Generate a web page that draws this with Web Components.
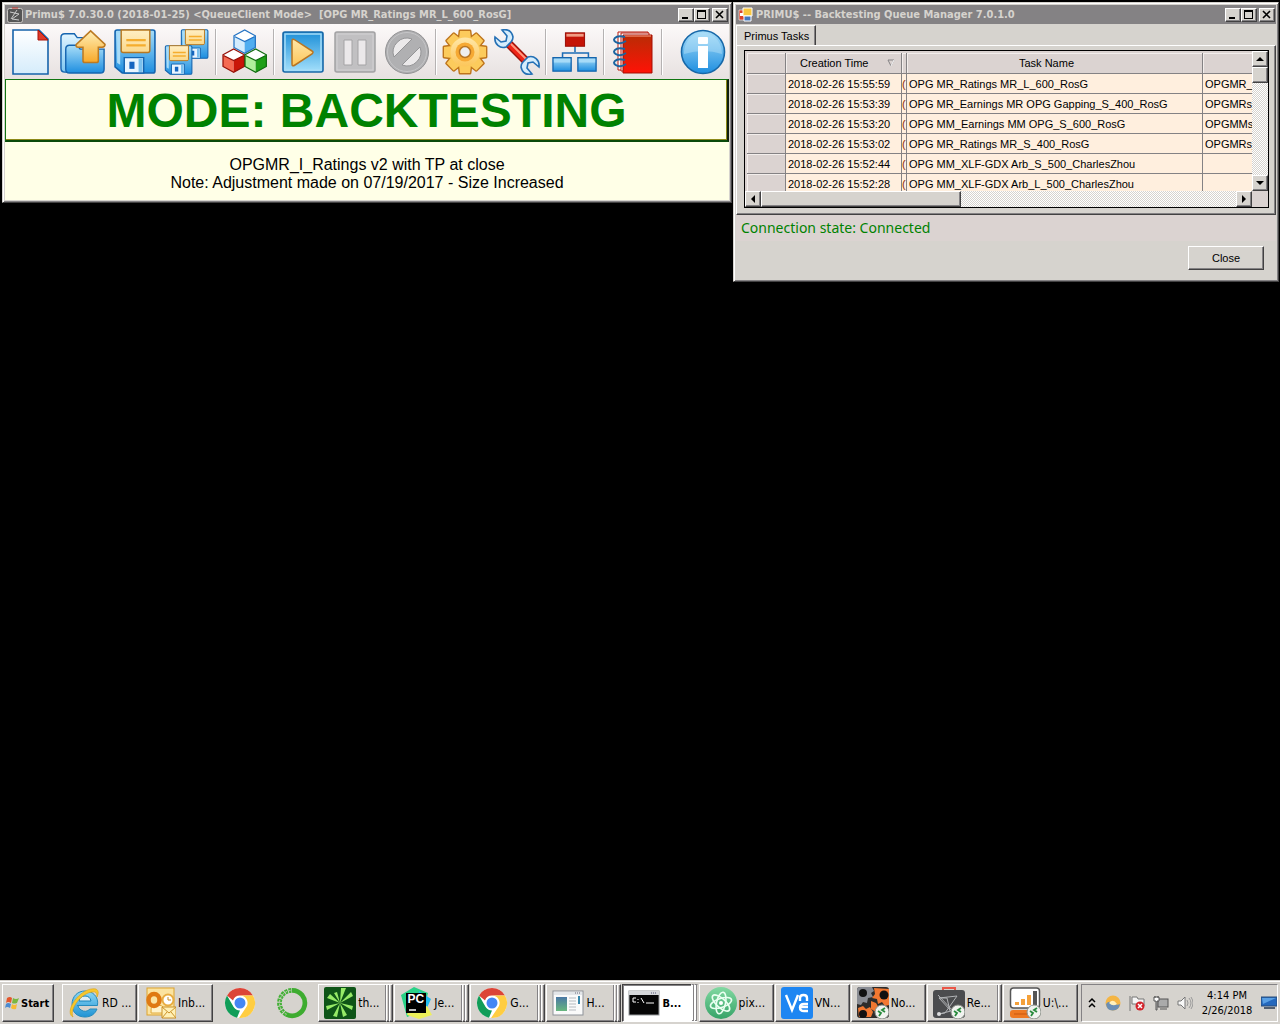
<!DOCTYPE html>
<html lang="en">
<head>
<meta charset="utf-8">
<title>Desktop</title>
<style>
html,body{height:100%}
body{margin:0;background:#000;overflow:hidden;font-family:"Liberation Sans",Arial,sans-serif}
</style>
</head>
<body>
<desk-top>
  <app-window slot="window" icon="primus" caption="Primu$ 7.0.30.0 (2018-01-25) &lt;QueueClient Mode&gt;  [OPG MR_Ratings MR_L_600_RosG]">
    <tool-bar></tool-bar>
    <mode-banner>MODE: BACKTESTING</mode-banner>
    <strategy-note>OPGMR_I_Ratings v2 with TP at close<br>Note: Adjustment made on 07/19/2017 - Size Increased</strategy-note>
  </app-window>
  <app-window slot="window" icon="form" caption="PRIMU$ -- Backtesting Queue Manager 7.0.1.0">
    <tab-panel label="Primus Tasks"><task-grid></task-grid></tab-panel>
    <status-line>Connection state: Connected</status-line>
    <dialog-actions></dialog-actions>
  </app-window>
  <task-bar slot="bar"></task-bar>
</desk-top>

<script>
const floppy = `<path d="M2 3q0-2 2-2h35q2 0 2 2v38q0 2-2 2H9l-7-6z" fill="url(#b)" stroke="#1565b0" stroke-width="1.6"/><path d="M4 4h3v31l-3-2z" fill="#a8dcf8"/><path d="M8 1h28v20q0 2-2 2H10q-2 0-2-2z" fill="url(#y)" stroke="#b87820" stroke-width="1.4"/><path d="M13 11h19M13 16h19" stroke="#f5ad2e" stroke-width="2.2"/><path d="M11 28h19v15H11z" fill="#e9f5ff" stroke="#1565b0" stroke-width="1.4"/><path d="M16 32h5v7h-5z" fill="#1565c0"/><path d="M25 29h4v13h-4z" fill="#7ac0ee"/>`;
const cube = (a,b,c,s) => `<path d="M0 6L11 0l11 6-11 6z" fill="${a}"/><path d="M0 6v12l11 6V12z" fill="${b}"/><path d="M22 6v12l-11 6V12z" fill="${c}"/><path d="M0 6L11 0l11 6v12l-11 6-11-6zM1 7l10 5 10-5" fill="none" stroke="${s}" stroke-width="1.3"/>`;
const chrome = `<circle cx="16" cy="16" r="15" fill="#fff"/><path d="M3 8.5A15 15 0 0 1 29 8.5H16a7.5 7.5 0 0 0-7 5z" fill="#dc4437"/><path d="M3 8.5l6.500 11.300A7.500 7.500 0 0 0 16 23.500l-3 7.200A15 15 0 0 1 3 8.500z" fill="#119d58"/><path d="M29 8.500H16a7.500 7.500 0 0 1 6.500 11.300L15 31A15 15 0 0 0 29 8.500z" fill="#ffcd41"/><circle cx="16" cy="16" r="7" fill="#fff"/><circle cx="16" cy="16" r="5.500" fill="#4486f4"/>`;
const badge = `<circle cx="25" cy="25" r="7" fill="#f1f3ef" stroke="#8a8f88"/><path d="M21 24l3 2-2 3M28 21l-3 2 3 2" stroke="#278a3b" stroke-width="1.800" fill="none"/>`;
const teeth = 'M17 10l1-8h10l1 8zM17 36l1 8h10l1-8zM10 17l-8 1v10l8 1zM36 17l8 1v10l-8 1z';
const I = {
new:['0 0 44 46',`<path d="M4 1h26l9 9v35H4z" fill="url(#p)" stroke="#1663ab" stroke-width="1.600"/><path d="M29 1l10 10H29z" fill="#e03a28" stroke="#a81208"/>`],
open:['0 0 48 46',`<path d="M1 8q0-4 4-4h10l3 4h14q3 0 3 4v32H5q-4 0-4-4z" fill="url(#l)" stroke="#1565b0" stroke-width="1.500"/><path d="M6 20q0-4 4-4h8l3 4h25v21q0 4-4 4H10q-4 0-4-4z" fill="url(#b)" stroke="#1565b0" stroke-width="1.500"/><path d="M32 1l15 14q0 3-3 3h-4v14q0 2-2 2H26q-2 0-2-2V18h-5q-3 0-2-3z" fill="url(#o)" stroke="#bc7a22" stroke-width="1.600"/>`],
save:['0 0 43 45',floppy],
saveall:['0 0 46 46',`<g transform="translate(16) scale(.68)">${floppy}</g><g transform="translate(0 16) scale(.68)">${floppy}</g>`],
cubes:['0 0 46 46',`<g transform="translate(12 1) scale(.97)">${cube('#fff','#d4ecfd','#50adf0','#2473c3')}</g><g transform="translate(1 20) scale(.97)">${cube('#fff','#f56a52','#c91608','#941008')}</g><g transform="translate(23 20) scale(.97)">${cube('#fff','#aff09b','#1fa018','#106c10')}</g>`],
play:['0 0 46 46',`<rect x="3" y="3" width="40" height="40" rx="2" fill="url(#k)" stroke="#1768a8" stroke-width="1.600"/><rect x="5" y="5" width="36" height="36" fill="none" stroke="#a5dcf7" stroke-width="1.500"/><path d="M12 12q0-3 3-1l17 11q2 1 0 3L15 36q-3 2-3-1z" fill="url(#q)" stroke="#b87522" stroke-width="1.500"/>`],
pause:['0 0 46 46',`<rect x="3" y="3" width="40" height="40" rx="2" fill="#c1c0c2" stroke="#a3a2a4" stroke-width="1.500"/><rect x="5" y="5" width="36" height="36" fill="none" stroke="#d3d1d3"/><path d="M12 11h8v25h-8zM26 11h8v25h-8z" fill="#ebe8ea" stroke="#a4a3a5"/>`],
stop:['0 0 46 46',`<circle cx="23" cy="23" r="21.500" fill="#b0b0b2" stroke="#919193"/><circle cx="23" cy="23" r="19.500" fill="none" stroke="#c5c5c7"/><path d="M10 28A14 14 0 0 1 28 10zM36 18A14 14 0 0 1 18 36z" fill="#ebe9ea" stroke="#949496"/>`],
gear:['0 0 46 46',`<g fill="#fbc34a" stroke="#bd741c" stroke-width="2.800" stroke-linejoin="round"><path d="${teeth}"/><path transform="rotate(45 23 23)" d="${teeth}"/><circle cx="23" cy="23" r="14.500"/></g><g fill="#fccb5c"><path d="${teeth}"/><path transform="rotate(45 23 23)" d="${teeth}"/></g><circle cx="23" cy="23" r="14.500" fill="url(#q)"/><circle cx="23" cy="23" r="9.500" fill="#f6a933"/><circle cx="23" cy="23" r="5.500" fill="#eee" stroke="#b87522" stroke-width="1.500"/>`],
wrench:['0 0 46 46',`<path d="M12 17l5-5 18 18-5 5z" fill="#ee2517" stroke="#9c1209" stroke-width="1.300"/><path d="M17 15l15 15" stroke="#ff9a80" stroke-width="1.800"/><g fill="#d6edfc" stroke="#2470b5" stroke-width="1.600"><path d="M8 1q9-2 11 7 0 3-2 5l-5 5C6 20 0 15 1 8l6 5 5-1 1-5z"/><path transform="rotate(180 23 23)" d="M8 1q9-2 11 7 0 3-2 5l-5 5C6 20 0 15 1 8l6 5 5-1 1-5z"/></g>`],
network:['0 0 48 46',`<path d="M24 17v6M11 29v-5h27v5" stroke="#1c6cb5" stroke-width="1.600" fill="none"/><rect x="14" y="3" width="20" height="14" fill="#c41407" stroke="#970b03"/><path d="M15 4h18v3H15z" fill="#f09b83"/><path d="M1 29h19v14H1zM27 29h19v14H27z" fill="url(#b)" stroke="#1565ad" stroke-width="1.400"/><path d="M2 30h17v4H2zM28 30h17v4H28z" fill="#a6dbf8"/>`],
book:['0 0 46 46',`<path d="M8 3h30v38H8z" fill="#fff" stroke="#b91b0d"/><path d="M11 4h28v38H11z" fill="#fff" stroke="#b91b0d"/><path d="M13 6h29v38H13z" fill="url(#r)" stroke="#a40c03"/><path d="M14 7h27" stroke="#ffa48a"/><g fill="none" stroke="#1b649f" stroke-width="2"><path d="M15 8C5 5 0 12 8 14q4 1 8-2"/><path d="M15 20C5 17 0 24 8 26q4 1 8-2"/><path d="M15 31C5 28 0 35 8 37q4 1 8-2"/></g>`],
info:['0 0 46 46',`<circle cx="23" cy="23" r="21.500" fill="url(#b)" stroke="#1768a8" stroke-width="1.600"/><path d="M4 25C4-3 42-3 42 25q-18-6-38 0z" fill="#b9e2f8" opacity=".45"/><rect x="18" y="8" width="10" height="7" rx="1" fill="#fff"/><path d="M18 17h10v22H18z" fill="#fff"/>`],
primus:['0 0 16 16',`<rect x=".5" y="1.500" width="15" height="14" rx="2" fill="#555" stroke="#c8c5c2"/><path d="M5 1h6" stroke="#c9342c"/><path d="M3 5l9 2-7 5 7 1M10 3L4 12" stroke="#ccc" fill="none"/>`],
form:['0 0 16 16',`<path d="M1 3h7v10H1z" fill="#d8432c" stroke="#fff" stroke-width=".6"/><path d="M5 1h9v8H5z" fill="#f9c73e" stroke="#fff"/><path d="M2 6h3v3H2z" fill="#fff"/><path d="M6 9h7v5H6z" fill="#4578be" stroke="#fff"/>`],
flag:['0 0 16 16',`<path d="M3 3q3-2 5 0l-1 5q-3-2-5 0z" fill="#e4572c"/><path d="M9 3q3 2 6 0l-2 5q-3 1-5 0z" fill="#7ab740"/><path d="M2 9q2-2 5 0l-1 4q-3-2-5 0z" fill="#4c8bd0"/><path d="M8 9q2 2 5 0l-1 5q-3 1-5-1z" fill="#f6bb35"/>`],
ie:['0 0 32 32',`<path d="M9 18.500h20.500C31 9 24 4 17 4S4 9 4 17.500 10 30 17 30c6 0 10-3 12-8h-7q-4 4-9 1-3-2-3-4.500z" fill="url(#c)" stroke="#258abc"/><path d="M11 14q1-5 6-5t6 5z" fill="#e1eef3" stroke="#1782b8"/><path d="M5 30C-5 25 13-1 28 2q4 2 1 8 0-6-4-5C14 5 1 22 5 30z" fill="#f8c72b" stroke="#daa116" stroke-width=".6"/>`],
outlook:['0 0 32 32',`<rect x="3" y="1" width="27" height="27" fill="#fbe3a0" stroke="#dda32c"/><circle cx="24" cy="13" r="5.500" fill="#fff" stroke="#e8ad41" stroke-width="2"/><path d="M24 10v3h3" stroke="#c98c21" fill="none"/><path d="M7 26q-1-10 8-8 6 1 6 8z" fill="#fff4cb" stroke="#e1aa39"/><ellipse cx="10" cy="13" rx="5.500" ry="6" fill="none" stroke="#df7912" stroke-width="4.500"/><path d="M18 20h14v11H18z" fill="#fff0b5" stroke="#cb922b"/><path d="M18 20l7 6 7-6M18 31l5-6M32 31l-5-6" stroke="#cb922b" fill="none"/>`],
chrome:['0 0 32 32',chrome],
anaconda:['0 0 34 34',`<path d="M17 3.500A13.500 13.500 0 1 1 11 29" fill="none" stroke="#3eac30" stroke-width="5"/><path d="M11 29A13.500 13.500 0 0 1 17 3.500" fill="none" stroke="#43b036" stroke-width="5" stroke-dasharray="3 1"/><path d="M11 29A13.500 13.500 0 0 1 17 3.500" fill="none" stroke="#d5d1c9" stroke-dasharray="2 2"/>`],
think:['0 0 32 32',`<rect width="32" height="32" rx="2" fill="#0e5417"/><path d="M16 16L17 1l5 0zM16 16L27 5l2 4zM16 16l13 3-1 4zM16 16l7 12-4 2zM16 16l-3 14-4-1zM16 16L3 23l-1-4zM16 16L3 11l3-4zM16 16L10 6l3-1z" fill="#96ea67"/>`],
pycharm:['0 0 32 32',`<path d="M1 8L14 0l14 6-4 17L7 30z" fill="#28d287"/><path d="M19 4l12 8-5 11H15z" fill="#21bdf0"/><path d="M8 24l19-5 5 9-13 4-12-4z" fill="#eef05a"/><rect x="6" y="6" width="20" height="20" fill="#000"/><path d="M9 23h7" stroke="#fff" stroke-width="1.500"/><text x="7.500" y="16" font-family="Liberation Sans" font-weight="bold" font-size="12" fill="#fff">PC</text>`],
hosts:['0 0 32 32',`<rect x="1" y="4" width="30" height="24" fill="#fafafa" stroke="#8d9298"/><path d="M2 5h28v3H2z" fill="#e3e6e9"/><path d="M23 6h5" stroke="#667" stroke-dasharray="1 1"/><rect x="4" y="10" width="11" height="14" fill="url(#g)"/><path d="M17 11h7M17 14h7M17 17h7M17 20h7M17 23h7" stroke="#b5babf"/><path d="M26 9h2v8h-2z" fill="#3486ab"/>`],
cmd:['0 0 32 32',`<rect x="1" y="4" width="30" height="24" fill="#050505" stroke="#96999c"/><path d="M1 4h30v4H1z" fill="#d5d7da"/><path d="M23 6h6" stroke="#557" stroke-dasharray="1 1"/><path d="M8 11H5v4h3M10 12v1M10 15v1M13 11l3 5M18 16h8" stroke="#fff" fill="none"/>`],
atom:['0 0 32 32',`<circle cx="16" cy="16" r="16" fill="url(#at)"/><g fill="none" stroke="#eafff1" stroke-width="1.600"><ellipse cx="16" cy="16" rx="4.500" ry="11" transform="rotate(12 16 16)"/><ellipse cx="16" cy="16" rx="4.500" ry="11" transform="rotate(72 16 16)"/><ellipse cx="16" cy="16" rx="4.500" ry="11" transform="rotate(132 16 16)"/></g><circle cx="16" cy="16" r="2" fill="#fff"/>`],
vnc:['0 0 32 32',`<rect width="32" height="32" rx="3" fill="#1e86f2"/><g fill="none" stroke="#fff" stroke-width="2.400"><path d="M5 8l6 15 6-15"/><path d="M19 14v-3q0-3 3.500-3t3.500 3v3M27 17h-4q-4 0-4 3.500t4 3.500h4M20 20h7"/></g>`],
gears:['0 0 32 32',`<rect width="32" height="31" rx="3" fill="#2d2c2b"/><path d="M0 3q0-3 3-3h12l2 4-3 2 2 4-5 1-1 5-4-1-2 3-4-1z" fill="#888b92"/><path d="M17 1l15 1v16l-4 1-3-4-4 2-1-5-5-1 3-4zM1 21l5-2 3 3 4-2 3 5-2 5H2z" fill="#f27831"/><path d="M14 14l5 2 3 5-3 4-5-3z" fill="#f27831"/><circle cx="6" cy="6" r="4" fill="#111"/><circle cx="27" cy="8" r="4.500" fill="#111"/><circle cx="6" cy="27" r="4" fill="#111"/>${badge}`],
remote:['0 0 32 32',`<path d="M10 5V1h12v4" fill="none" stroke="#ea5748" stroke-width="2"/><rect y="3" width="32" height="28" rx="3" fill="#4b4c4e"/><path d="M6 11l18-2-12 17-6 1 12-3-12-13 8 0 3 13M5 8l16 17" stroke="#b1b3b5" fill="none"/><circle cx="6" cy="27" r="2" fill="#ddd"/>${badge}`],
chart:['0 0 32 32',`<rect x="1.500" y="1" width="29" height="20" rx="3" fill="#fff" stroke="#555" stroke-width="1.500"/><path d="M6 15h4v3H6zM12 12h4v6h-4zM18 8h4v10h-4z" fill="#f5a13a"/><path d="M24 4h4v14h-4z" fill="#555"/><rect x="1" y="23" width="26" height="8" rx="3" fill="#ee7921"/><path d="M5 27h14" stroke="#c9560d"/>${badge}`],
globe:['0 0 16 16',`<circle cx="8" cy="8" r="7.500" fill="#f4b544"/><path d="M1 9q3-4 7-1t7 1q-1 6-7 6.500T1 9z" fill="#6a8eb4"/><path d="M4 8q4-5 8 1-4 3-8-1z" fill="#fff1bb"/>`],
alert:['0 0 16 16',`<path d="M1 1v15M3 2h5l1 2h6v7H9L8 9H3z" fill="#f6f6f6" stroke="#777"/><circle cx="11" cy="11" r="4.500" fill="#d3232b"/><path d="M9 9l4 4M13 9l-4 4" stroke="#fff" stroke-width="1.500"/>`],
net:['0 0 16 16',`<rect x="5" y="4" width="10" height="8" fill="#aaa" stroke="#555"/><path d="M7 14h7M1 2h5v4H4v9H3V6H1zM2 1v2M5 1v2" stroke="#555" fill="#fff"/>`],
sound:['0 0 16 16',`<path d="M1 6h3l4-4v12l-4-4H1z" fill="#f8f8f8" stroke="#777"/><path d="M10 5q2 3 0 6M12 3q4 5 0 10M14 2q4 6 0 12" stroke="#999" fill="none"/>`],
desk:['0 0 16 14',`<path d="M0 1h16v9H0z" fill="#2468bd" stroke="#294d78"/><path d="M1 2h14L2 8z" fill="#5aa0e4"/><path d="M3 12h11" stroke="#536071" stroke-width="2"/>`],
chev:['0 0 8 12',`<path d="M1 5l3-3 3 3M1 10l3-3 3 3" stroke="#000" stroke-width="1.500" fill="none"/>`]
};
const defs = `<defs>${[['b','#a9def8','#1d8ee0'],['c','#8fd8f5','#1f93d4'],['k','#1c8fd8','#a4e0fb'],['l','#e2f5ff','#7fc7f0'],['y','#ffefc4','#fbd88a'],['o','#fff0b8','#f8a928'],['q','#ffe7a8','#fcc65a'],['p','#ffffff','#d5ecfb'],['r','#b92c05','#ff1206'],['g','#4a78a5','#68b77e'],['at','#82d9a2','#37a367']].map(([id,a,b])=>`<linearGradient id="${id}" x2="0" y2="1"><stop stop-color="${a}"/><stop offset="1" stop-color="${b}"/></linearGradient>`).join('')}</defs>`;

function element(name, css, html){
  customElements.define(name, class extends HTMLElement{
    connectedCallback(){
      if(this.shadowRoot) return;
      this.attachShadow({mode:'open'}).innerHTML = `<style>*{box-sizing:border-box}:host{display:block;box-sizing:border-box}button{font:inherit;color:inherit;margin:0;padding:0;border-radius:0}${css}</style>` + (typeof html==='function' ? html(this) : html);
    }
  });
}
const esc = s => s.replace(/&/g,'&amp;').replace(/</g,'&lt;');
const raised = 'background:#d6d3ce;border:1px solid;border-color:#fff #424142 #424142 #fff;box-shadow:inset -1px -1px #848284;';

element('ui-icon', 'svg{display:block;width:100%;height:100%}', h => {
  const [box, art] = I[h.getAttribute('name')];
  return `<svg viewBox="${box}" aria-hidden="true">${defs}${art}</svg>`;
});

element('desk-top', `:host{height:100%;display:flex;flex-direction:column;background:#000}
main{flex:1;display:grid;grid-template-columns:730fr 546fr;align-items:start;gap:1px;padding:2px 1px 0 2px;min-height:0}`,
`<main><slot name="window"></slot></main><slot name="bar"></slot>`);

element('app-window', `:host{min-width:0;background:#d6d3ce;border:1px solid;border-color:#d6d3ce #424142 #424142 #d6d3ce;box-shadow:inset 1px 1px #fff,inset -1px -1px #848284;padding:2px}
header{height:19px;background:#848284;color:#d6d3ce;display:flex;align-items:center;padding:0 1px 0 2px;gap:2px}
header ui-icon{width:16px;height:16px}
h1{margin:0;flex:1;min-width:0;font:bold 11px "DejaVu Sans Condensed","DejaVu Sans",sans-serif;white-space:pre;overflow:hidden}
.controls{display:flex}
button{width:16px;height:14px;${raised}display:grid;place-items:center;color:#000}
button:last-child{margin-left:2px}
svg{width:10px;height:9px}`,
h => `<header><ui-icon name="${h.getAttribute('icon')}"></ui-icon><h1>${esc(h.getAttribute('caption'))}</h1><div class="controls">
<button aria-label="Minimize"><svg viewBox="0 0 10 9"><path d="M1 7h6v2H1z"/></svg></button>
<button aria-label="Maximize"><svg viewBox="0 0 10 9"><path d="M0 0h9v9H0zM1 2v6h7V2z" fill-rule="evenodd"/></svg></button>
<button aria-label="Close window"><svg viewBox="0 0 10 9"><path d="M1 1l7 7M8 1L1 8" stroke="#000" stroke-width="1.600"/></svg></button></div></header><slot></slot>`);

element('tool-bar', `:host{display:flex;align-items:center;height:55px;background:linear-gradient(#fcf9f9,#e7e1e0)}
button{width:52px;height:50px;background:none;border:0;display:grid;place-items:center}
ui-icon{width:46px;height:46px}
i{width:2px;height:46px;margin:0 2px;background:#b5b2b2;border-right:1px solid #fff}
button:last-child{margin-left:auto}`,
[['new','New'],['open','Open'],['save','Save'],['saveall','Save all'],0,['cubes','Modules'],0,['play','Run'],['pause','Pause'],['stop','Stop'],0,['gear','Settings'],['wrench','Tools'],0,['network','Network'],0,['book','Log'],0,['info','About']].map(b=>b?`<button aria-label="${b[1]}"><ui-icon name="${b[0]}"></ui-icon></button>`:'<i></i>').join(''));

element('mode-banner', `:host{height:63px;background:#ffffe7;border:1px solid #107510;border-width:1px 2px 2px 1px;border-right-color:#102010;border-bottom-color:#0a4a0a;box-shadow:inset -1px -1px #8c8a18;color:#008200;font:bold 48px/62px "Liberation Sans",Arial,sans-serif;text-align:center;white-space:nowrap;overflow:hidden}`, '<slot></slot>');
element('strategy-note', `:host{background:#ffffe7;padding:14px 0 8px;font:16px/18px "Liberation Sans",Arial,sans-serif;text-align:center;color:#000}`, '<slot></slot>');

element('tab-panel', `:host{padding-top:1px}
button{display:block;height:20px;padding:0 6px 0 7px;background:#d6d3ce;border:1px solid;border-color:#fff #424142 transparent #fff;border-bottom:0;box-shadow:inset -1px 0 #848284;font-size:11px;color:#000}
section{border:1px solid;border-color:#fff #424142 #424142 #fff;box-shadow:inset -1px -1px #848284;padding:4px 6px 6px 7px}`,
h => `<button role="tab" aria-selected="true">${h.getAttribute('label')}</button><section role="tabpanel"><slot></slot></section>`);

const rows = [['15:55:59','OPG MR_Ratings MR_L_600_RosG','OPGMR_'],['15:53:39','OPG MR_Earnings MR OPG Gapping_S_400_RosG','OPGMRs_'],['15:53:20','OPG MM_Earnings MM OPG_S_600_RosG','OPGMMs_'],['15:53:02','OPG MR_Ratings MR_S_400_RosG','OPGMRs_'],['15:52:44','OPG MM_XLF-GDX Arb_S_500_CharlesZhou',''],['15:52:28','OPG MM_XLF-GDX Arb_L_500_CharlesZhou','']];
element('task-grid', `:host{border:1px solid #000;background:#dbd3d1;display:grid;grid-template:140px 16px / minmax(0,1fr) 16px;font-size:11px}
.view{overflow:hidden;padding:2px 0 0 2px}
table{border-collapse:separate;border-spacing:0;table-layout:fixed;width:100%;color:#000}
col.head{width:39px}col.time{width:116px}col.flag{width:5px}col.extra{width:49px}
th,td{height:20px;padding:0 2px;border-right:1px solid #848284;border-bottom:1px solid #848284;white-space:nowrap;overflow:hidden;font-weight:normal;text-align:left;line-height:16px}
td:last-child{padding:0 0 0 2px}
thead th{height:21px;text-align:center}
td{background:#ffefde}
th{background:#dbd3d1;box-shadow:inset 1px 1px #f3eeec}
th.name{padding-right:18px}
th:last-child,td:last-child{border-right:0}
td.flag{padding:0;color:#8c2800}
.sort{display:flex;align-items:center;justify-content:space-between;padding:0 4px 0 12px}
svg{display:block}
.v,.h{background:repeating-conic-gradient(#fff 0 25%,#d6d3ce 0 50%) 0 0/2px 2px;display:flex}
.v{flex-direction:column}
.v button,.h button{${raised}width:16px;height:16px;display:grid;place-items:center;flex:none}
.thumb{${raised}}
.v .thumb{height:16px}.h .thumb{width:200px}
.end{margin-left:auto}.v .end{margin:auto 0 0}`,
`<div class="view"><table><colgroup><col class="head"><col class="time"><col class="flag"><col><col class="extra"></colgroup>
<thead><tr><th></th><th><div class="sort">Creation Time<svg width="8" height="8"><path d="M1 1h6L4 7z" fill="none" stroke="#848284"/><path d="M7 1L4 7" stroke="#fff"/></svg></div></th><th></th><th class="name">Task Name</th><th></th></tr></thead>
<tbody>${rows.map(r=>`<tr><th></th><td>2018-02-26 ${r[0]}</td><td class="flag">(</td><td>${r[1]}</td><td>${r[2]}</td></tr>`).join('')}</tbody></table></div>
<div class="v"><button aria-label="Scroll up"><svg width="8" height="4"><path d="M0 4l4-4 4 4z"/></svg></button><div class="thumb"></div><button class="end" aria-label="Scroll down"><svg width="8" height="4"><path d="M0 0l4 4 4-4z"/></svg></button></div>
<div class="h"><button aria-label="Scroll left"><svg width="4" height="8"><path d="M4 0L0 4l4 4z"/></svg></button><div class="thumb"></div><button class="end" aria-label="Scroll right"><svg width="4" height="8"><path d="M0 0l4 4-4 4z"/></svg></button></div>`);

element('status-line', `:host{background:#dbd3d1;height:26px;padding:0 5px;color:#008200;font:14px/26px "Noto Sans","Open Sans",sans-serif}`, '<slot></slot>');
element('dialog-actions', `:host{display:flex;justify-content:flex-end;padding:5px 12px 9px}
button{${raised}width:76px;height:24px;font-size:11px;color:#000}`, '<button>Close</button>');

element('task-button', `:host{flex:1 1 0;min-width:0;display:flex;height:38px}
button{flex:1;min-width:0;${raised}display:flex;align-items:center;gap:2px;padding:0 0 0 5px;color:#000;white-space:nowrap}
ui-icon{flex:none;width:32px;height:32px}
i{width:4px;${raised}margin-left:-1px}
:host([active]) button{background:#fff;border-color:#424142 #fff #fff #424142;box-shadow:inset 1px 1px #848284;font-weight:bold;font-size:11px}
:host([active]) i{background:#fff;border-color:#848284 #d6d3ce #fff #fff}
:host([plain]){flex:0 0 51px}
:host([plain]) button{background:none;border:0;box-shadow:none;justify-content:center;padding:0}`,
h => `<button ${h.hasAttribute('plain')?`aria-label="${h.getAttribute('icon')}"`:''}><ui-icon name="${h.getAttribute('icon')}"></ui-icon>${h.textContent?'<slot></slot>':''}</button>${'<i></i>'.repeat(+h.getAttribute('stack')||0)}`);

element('task-bar', `:host{flex:none;height:44px;display:flex;align-items:center;background:#d6d3ce;border-top:1px solid #d6d3ce;box-shadow:inset 0 1px #fff;padding:1px 2px 0;font:11px "DejaVu Sans Condensed","DejaVu Sans",sans-serif}
.start{${raised}width:52px;height:38px;display:flex;align-items:center;gap:1px;padding-left:1px;font-weight:bold;color:#000;margin-right:8px}
.start ui-icon{width:16px;height:16px}
nav{flex:1;display:flex;gap:1px;min-width:0;font-size:12px}
.tray{flex:none;width:197px;height:38px;margin-left:3px;border:1px solid;border-color:#848284 #fff #fff #848284;display:flex;align-items:center;gap:8px;padding-left:6px}
.tray ui-icon{width:16px;height:16px;flex:none}
.tray ui-icon[name=chev]{width:8px;height:12px;margin-right:1px}
time{flex:1;text-align:center;line-height:15px;color:#000}`,
`<button class="start"><ui-icon name="flag"></ui-icon>Start</button><nav>
<task-button icon="ie">RD ...</task-button><task-button icon="outlook">Inb...</task-button><task-button icon="chrome" plain></task-button><task-button icon="anaconda" plain></task-button><task-button icon="think" stack="2">th...</task-button><task-button icon="pycharm" stack="2">Je...</task-button><task-button icon="chrome" stack="2">G...</task-button><task-button icon="hosts" stack="2">H...</task-button><task-button icon="cmd" stack="2" active>B...</task-button><task-button icon="atom">pix...</task-button><task-button icon="vnc">VN...</task-button><task-button icon="gears">No...</task-button><task-button icon="remote" stack="1">Re...</task-button><task-button icon="chart">U:\\...</task-button></nav>
<div class="tray"><ui-icon name="chev"></ui-icon><ui-icon name="globe"></ui-icon><ui-icon name="alert"></ui-icon><ui-icon name="net"></ui-icon><ui-icon name="sound"></ui-icon><time>4:14 PM<br>2/26/2018</time><ui-icon name="desk"></ui-icon></div>`);
</script>
</body>
</html>
